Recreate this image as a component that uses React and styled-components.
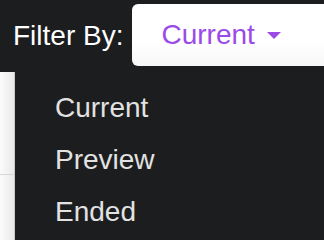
import React from 'react';
import styled, { createGlobalStyle } from 'styled-components';

const GlobalStyle = createGlobalStyle`
    html, body {
        margin: 0;
        padding: 0;
        background: #1c1d1f;
        font-family: "Liberation Sans", Arial, sans-serif;
    }
`

const Page = styled.div`
    display: flex;
    flex-direction: column;
    height: 100vh;
    overflow: hidden;
`

const TopBar = styled.div`
    display: flex;
    align-items: center;
    height: 72px;
    padding-left: 13px;
    background: #1c1d1f;
    flex-shrink: 0;
`

const Label = styled.span`
    color: #ffffff;
    font-size: 28px;
    white-space: nowrap;
`

const SelectButton = styled.button`
    display: flex;
    align-items: center;
    gap: 12px;
    margin-left: 9px;
    margin-top: -3px;
    height: 62px;
    flex: 1;
    padding: 0 0 0 29px;
    border: none;
    border-radius: 6px 0 0 6px;
    background: linear-gradient(to bottom, #ffffff 60%, #f7f7f7);
    color: #9b4ae8;
    font-family: inherit;
    font-size: 28px;
    cursor: pointer;
`

const Caret = styled.span`
    width: 0;
    height: 0;
    border-left: 7px solid transparent;
    border-right: 7px solid transparent;
    border-top: 7px solid #9b4ae8;
    margin-top: 2px;
`

const Body = styled.div`
    display: flex;
    flex: 1;
`

const Backdrop = styled.div`
    width: 14px;
    background: linear-gradient(to right, #fbfbfb, #e9e9e9);
    border-right: 1px solid #cbcbcb;
`

const BackdropRow = styled.div`
    height: 102px;
    border-bottom: 1px solid #d6d6d6;
`

const Menu = styled.ul`
    flex: 1;
    margin: 0;
    padding: 10px 0 0 40px;
    list-style: none;
    background: #1c1d1f;
    border-top-left-radius: 6px;
`

const MenuItem = styled.li`
    color: #e2e2e2;
    font-size: 28px;
    line-height: 52px;
    cursor: pointer;
`

const options = ["Current", "Preview", "Ended"]

function App() {
    return (
        <Page>
            <GlobalStyle />
            <TopBar>
                <Label>Filter By:</Label>
                <SelectButton type="button">
                    Current
                    <Caret />
                </SelectButton>
            </TopBar>
            <Body>
                <Backdrop>
                    <BackdropRow />
                </Backdrop>
                <Menu>
                    {options.map(option => (
                        <MenuItem key={option}>{option}</MenuItem>
                    ))}
                </Menu>
            </Body>
        </Page>
    )
}

export default App
